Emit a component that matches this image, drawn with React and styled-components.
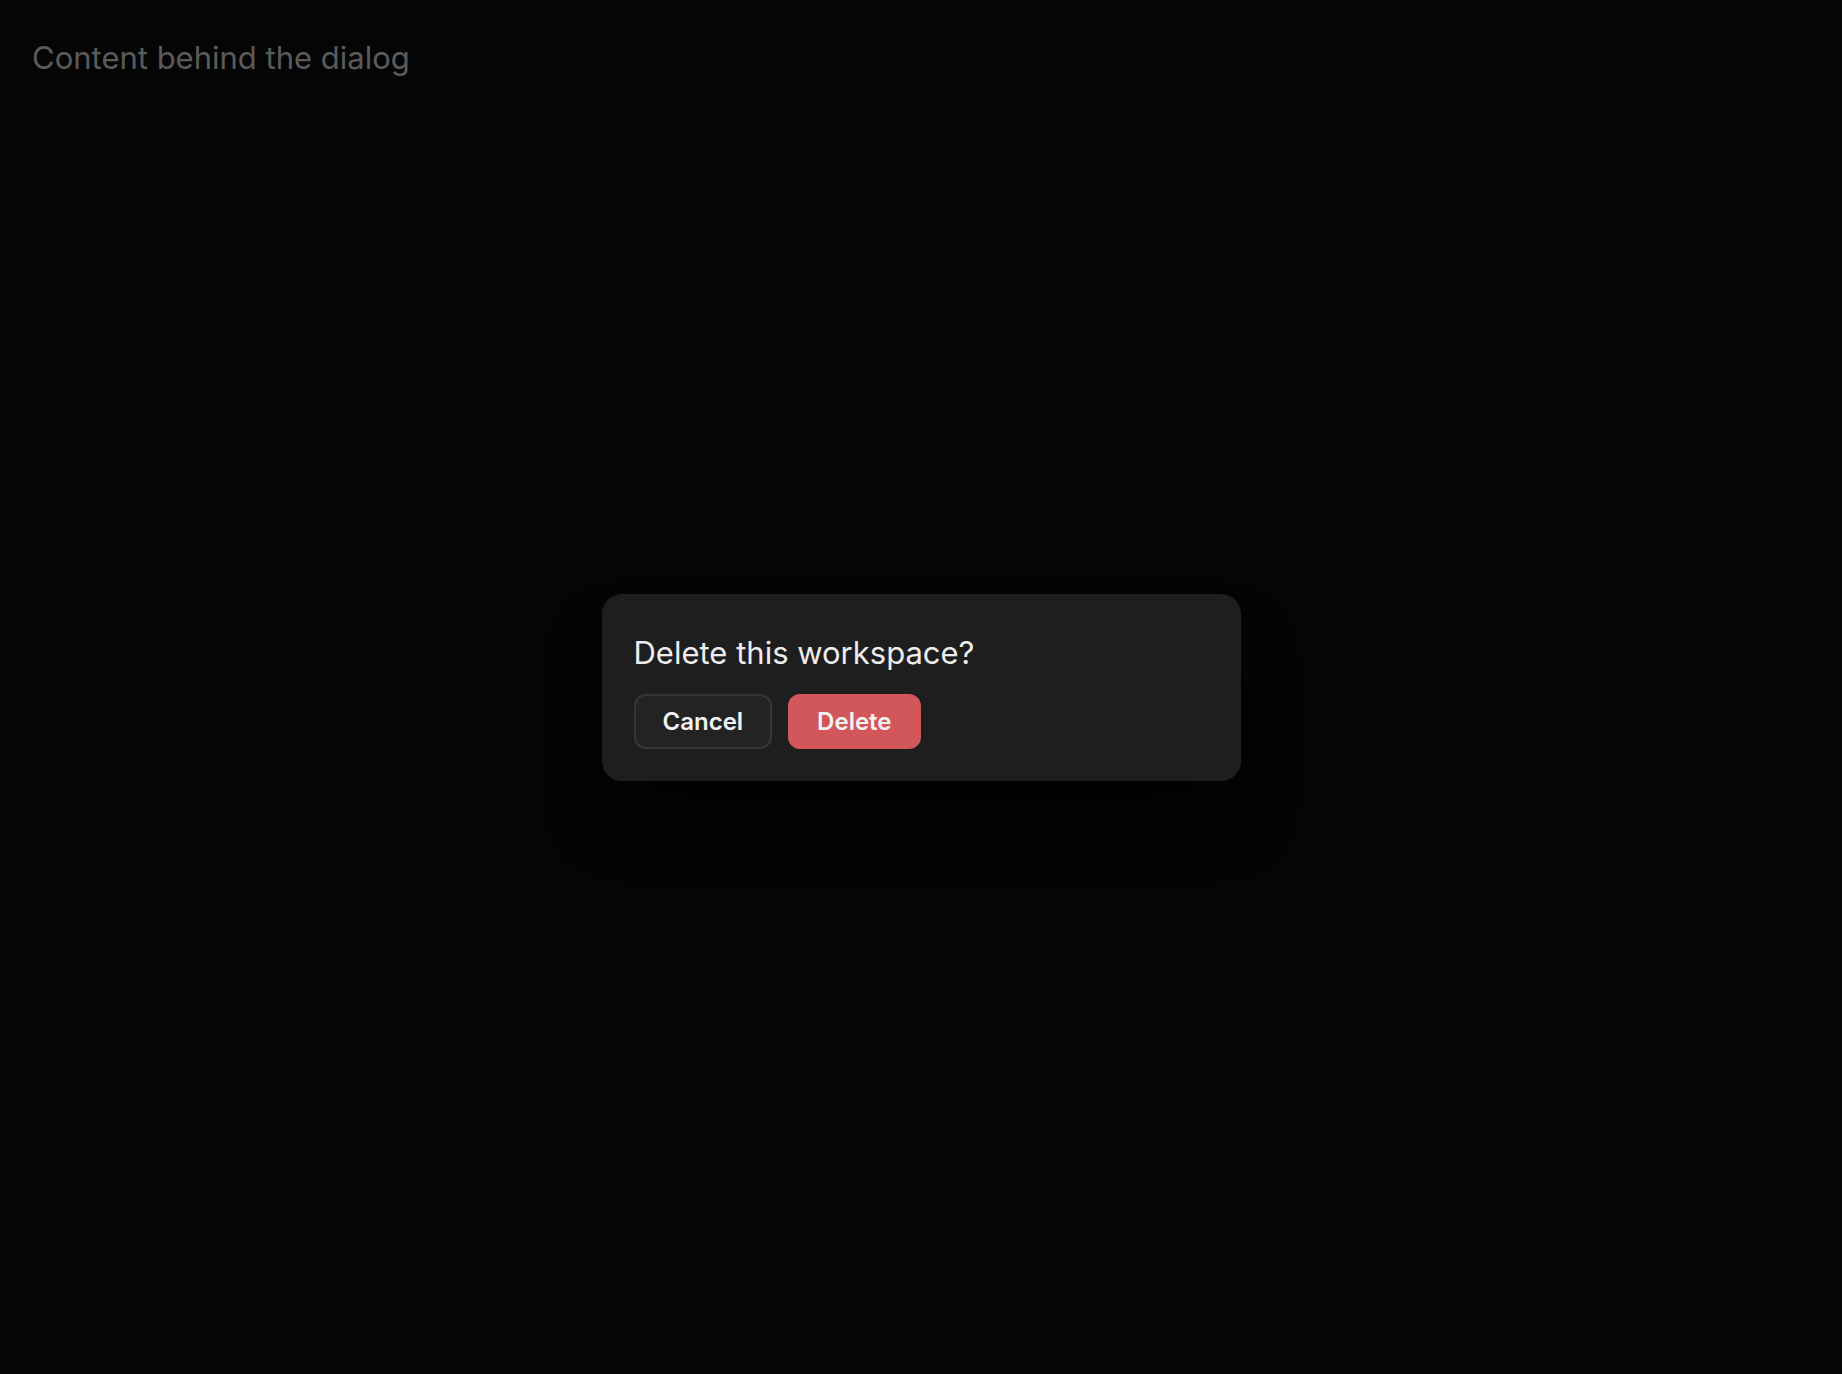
import styled, { createGlobalStyle } from 'styled-components';

const GlobalStyle = createGlobalStyle`
  html, body {
    margin: 0;
    padding: 0;
    background: #050505;
    font-family: Inter, 'Liberation Sans', sans-serif;
  }
`;

const Page = styled.div`
  position: relative;
  width: 100vw;
  height: 100vh;
  overflow: hidden;
  background: #0a0a0a;
`;

const BehindText = styled.p`
  margin: 0;
  padding: 38px 32px;
  font-size: 31px;
  line-height: 40px;
  color: #b4b4b4;
`;

const Overlay = styled.div`
  position: absolute;
  inset: 0;
  background: rgba(0, 0, 0, 0.5);
  display: grid;
  place-items: center;
`;

const Dialog = styled.div`
  width: 639px;
  box-sizing: border-box;
  padding: 32px;
  background: #1e1e1e;
  border-radius: 20px;
  box-shadow: 0 44px 64px -14px rgba(0, 0, 0, 0.85);
`;

const Title = styled.h2`
  margin: 0 0 14px;
  font-size: 31px;
  line-height: 54px;
  font-weight: 400;
  color: #ededed;
`;

const Actions = styled.div`
  display: flex;
  gap: 16px;
`;

const Button = styled.button`
  height: 55px;
  padding: 0 27px;
  border-radius: 12px;
  font-family: inherit;
  font-size: 24px;
  font-weight: 600;
  color: #f2f2f2;
  cursor: pointer;
  border: 2px solid ${(p) => (p.$danger ? '#d1575a' : '#363636')};
  background: ${(p) => (p.$danger ? '#d1575a' : '#232323')};
`;

const App = () => {
  return (
    <>
      <GlobalStyle />
      <Page>
        <BehindText>Content behind the dialog</BehindText>
        <Overlay>
          <Dialog role='dialog'>
            <Title>Delete this workspace?</Title>
            <Actions>
              <Button>Cancel</Button>
              <Button $danger>Delete</Button>
            </Actions>
          </Dialog>
        </Overlay>
      </Page>
    </>
  );
};

export default App;
